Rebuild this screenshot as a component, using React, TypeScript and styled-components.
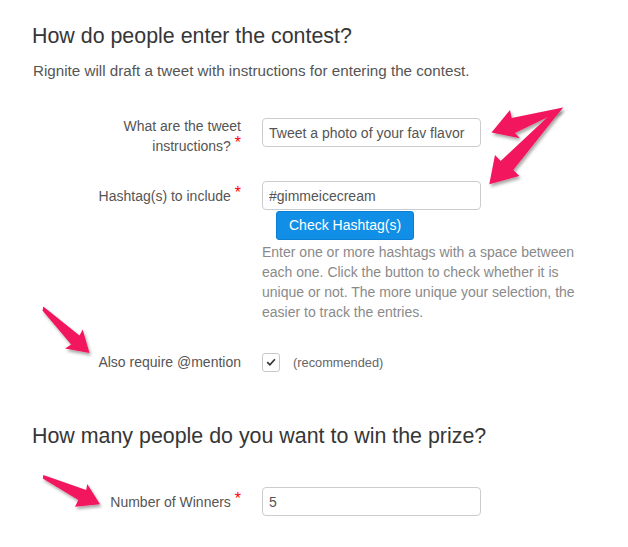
import React from "react";
import styled, { createGlobalStyle } from "styled-components";

const Global = createGlobalStyle`
  html, body { margin: 0; padding: 0; background: #ffffff; }
  body { font-family: "Liberation Sans", Arial, Helvetica, sans-serif; }
  * { box-sizing: border-box; }
`;

const Page = styled.div`
  position: relative;
  width: 628px;
  height: 547px;
  overflow: hidden;
  padding: 24px 0 0 32px;
  background: #ffffff;
`;

const Heading = styled.h2<{ $mt?: number }>`
  margin: ${(p) => p.$mt ?? 0}px 0 0 0;
  font-size: 21.4px;
  line-height: 24px;
  font-weight: 400;
  color: #363636;
`;

const Lead = styled.p`
  margin: 13px 0 0 1px;
  font-size: 15.2px;
  line-height: 20px;
  color: #555555;
`;

const Row = styled.div<{ $mt: number; $align: "center" | "start" }>`
  display: grid;
  grid-template-columns: 209px 219px;
  column-gap: 21px;
  align-items: ${(p) => p.$align};
  margin-top: ${(p) => p.$mt}px;
`;

const Label = styled.label<{ $pt?: number }>`
  justify-self: end;
  max-width: 150px;
  text-align: right;
  font-size: 14px;
  line-height: 20px;
  color: #555555;
  padding-top: ${(p) => p.$pt ?? 0}px;
`;

const Req = styled.span`
  position: relative;
  top: -3px;
  font-size: 16px;
  line-height: 0;
  color: #ff0000;
`;

const Field = styled.div<{ $pt?: number }>`
  display: flex;
  flex-direction: column;
  align-items: flex-start;
  padding-top: ${(p) => p.$pt ?? 0}px;
`;

const TextInput = styled.input`
  width: 219px;
  height: 29px;
  margin: 0;
  padding: 0 6px;
  border: 1px solid #cccccc;
  border-radius: 4px;
  background: #ffffff;
  font-family: "Liberation Sans", Arial, Helvetica, sans-serif;
  font-size: 14px;
  color: #555555;
  outline: none;
`;

const BlueButton = styled.button`
  margin: 1px 0 0 14px;
  height: 29px;
  padding: 0 12px;
  border: 1px solid #0b7fd4;
  border-radius: 3px;
  background: #118fe6;
  color: #ffffff;
  font-family: "Liberation Sans", Arial, Helvetica, sans-serif;
  font-size: 14px;
  line-height: 27px;
  cursor: pointer;
`;

const Help = styled.p`
  margin: 2px 0 0 0;
  width: 330px;
  font-size: 14px;
  line-height: 20px;
  color: #8a8a8a;
`;

const CheckLine = styled.div`
  display: flex;
  align-items: center;
  gap: 13px;
`;

const CheckBox = styled.span`
  display: inline-flex;
  align-items: center;
  justify-content: center;
  width: 18px;
  height: 19px;
  border: 1px solid #c8c8c8;
  border-radius: 3px;
  background: #ffffff;
`;

const Note = styled.span`
  font-size: 12.8px;
  color: #666666;
`;

const Overlay = styled.svg`
  position: absolute;
  left: 0;
  top: 0;
  width: 628px;
  height: 547px;
  pointer-events: none;
`;

const arrows = [
  "563,107.5 511.7,118 510,110 491.5,132.5 520,138.3 515,133 559.5,111.5",
  "563,107.5 513.3,170 519.3,176 489.3,184.3 495,155 500.7,161 553.5,111.5",
  "43.3,306.5 79.5,335.5 82.7,329.5 89.5,353 65,348.5 71.2,344.5 42.5,310.5",
  "43.3,475 86.2,490 87.3,484 100,504.3 75,506.7 78.3,500 42.8,478.6",
];

export default function App() {
  return (
    <Page>
      <Global />
      <Heading>How do people enter the contest?</Heading>
      <Lead>Rignite will draft a tweet with instructions for entering the contest.</Lead>

      <Row $mt={35} $align="start">
        <Label>
          What are the tweet instructions? <Req>*</Req>
        </Label>
        <Field $pt={2}>
          <TextInput readOnly value="Tweet a photo of your fav flavor" />
        </Field>
      </Row>

      <Row $mt={25} $align="start">
        <Label $pt={5}>
          Hashtag(s) to include <Req>*</Req>
        </Label>
        <Field>
          <TextInput readOnly value="#gimmeicecream" />
          <BlueButton type="button">Check Hashtag(s)</BlueButton>
          <Help>
            Enter one or more hashtags with a space between each one. Click the button to
            check whether it is unique or not. The more unique your selection, the easier to
            track the entries.
          </Help>
        </Field>
      </Row>

      <Row $mt={30} $align="center">
        <Label>Also require @mention</Label>
        <CheckLine>
          <CheckBox>
            <svg width="10" height="8" viewBox="0 0 10 8">
              <path d="M1.2 4.2 L3.9 6.8 L8.9 1.3" fill="none" stroke="#333333" strokeWidth="1.7" />
            </svg>
          </CheckBox>
          <Note>(recommended)</Note>
        </CheckLine>
      </Row>

      <Heading $mt={52}>How many people do you want to win the prize?</Heading>

      <Row $mt={39} $align="center">
        <Label>
          Number of Winners <Req>*</Req>
        </Label>
        <Field>
          <TextInput readOnly value="5" />
        </Field>
      </Row>

      <Overlay viewBox="0 0 628 547">
        <defs>
          <filter id="shadow" x="-20%" y="-20%" width="140%" height="140%">
            <feDropShadow dx="1.5" dy="2.5" stdDeviation="1.6" floodColor="#000000" floodOpacity="0.35" />
          </filter>
        </defs>
        {arrows.map((pts, i) => (
          <polygon key={i} points={pts} fill="#f2155e" filter="url(#shadow)" strokeLinejoin="round" />
        ))}
      </Overlay>
    </Page>
  );
}
